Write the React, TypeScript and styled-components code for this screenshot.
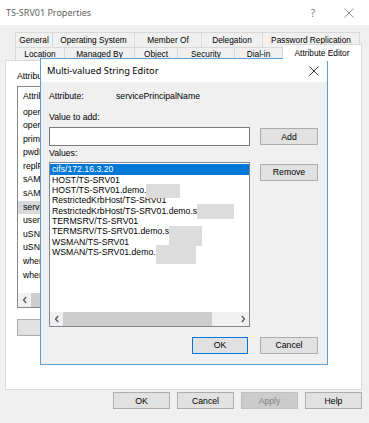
import React from "react";
import styled, { createGlobalStyle } from "styled-components";

const GlobalStyle = createGlobalStyle`
  html, body { margin: 0; padding: 0; }
  body {
    width: 369px; height: 423px; overflow: hidden; background: #f0f0f0;
    font-family: "Liberation Sans", Arial, sans-serif; color: #000;
  }
  * { box-sizing: border-box; }
`;

const Window = styled.div`
  position: relative;
  width: 369px;
  height: 423px;
  background: #f0f0f0;
  display: flex;
  flex-direction: column;
`;

const TitleBar = styled.div<{ $h: number }>`
  height: ${(p) => p.$h}px;
  flex: none;
  background: #fff;
  display: flex;
  align-items: center;
  padding-left: 6px;
`;

const TitleText = styled.span<{ $active?: boolean; $size: number }>`
  flex: 1;
  font-family: "Noto Sans", "Liberation Sans", sans-serif;
  font-size: ${(p) => p.$size}px;
  color: ${(p) => (p.$active ? "#000" : "#5f5f5f")};
  white-space: nowrap;
`;

const CaptionBtn = styled.span<{ $w: number; $color: string }>`
  width: ${(p) => p.$w}px;
  height: 100%;
  display: flex;
  align-items: center;
  justify-content: center;
  color: ${(p) => p.$color};
  font-family: "Noto Sans", sans-serif;
  font-size: 10px;
`;

const TabStrip = styled.div`
  display: flex;
  flex-direction: column;
  padding: 7px 0 0 15px;
`;

const TabRow = styled.div<{ $h: number }>`
  display: flex;
  height: ${(p) => p.$h}px;
`;

const Tab = styled.div<{ $w: number; $selected?: boolean }>`
  width: ${(p) => p.$w}px;
  flex: none;
  height: ${(p) => (p.$selected ? "calc(100% + 4px)" : "100%")};
  margin-top: ${(p) => (p.$selected ? "-3px" : "0")};
  border: 1px solid #d9d9d9;
  border-bottom: none;
  background: ${(p) => (p.$selected ? "#fff" : "#f0f0f0")};
  font-size: 8.3px;
  display: flex;
  align-items: center;
  justify-content: center;
  white-space: nowrap;
  position: ${(p) => (p.$selected ? "relative" : "static")};
  z-index: ${(p) => (p.$selected ? 2 : "auto")};
  & + & { border-left: none; }
`;

const Panel = styled.div`
  margin-left: 5px;
  width: 357px;
  height: 330px;
  border: 1px solid #d9d9d9;
  background: #fff;
  display: flex;
  flex-direction: column;
  align-items: flex-start;
  padding: 10px 0 0 11px;
`;

const Label = styled.div<{ $mt?: number }>`
  font-size: 8.7px;
  line-height: 11px;
  height: 11px;
  margin-top: ${(p) => p.$mt ?? 0}px;
  white-space: nowrap;
`;

const AttrList = styled.div`
  margin-top: 3.5px;
  width: 300px;
  height: 222px;
  border: 1px solid #828790;
  background: #fff;
  display: flex;
  flex-direction: column;
`;

const AttrHeader = styled.div`
  height: 19px;
  flex: none;
  padding-left: 5px;
  display: flex;
  align-items: center;
  font-size: 8.7px;
  white-space: nowrap;
`;

const AttrRow = styled.div<{ $sel?: boolean }>`
  height: 13.6px;
  line-height: 13.6px;
  flex: none;
  padding-left: 5px;
  font-size: 8.7px;
  background: ${(p) => (p.$sel ? "#d9d9d9" : "transparent")};
  white-space: nowrap;
`;

const HScroll = styled.div`
  margin-top: auto;
  height: 14px;
  flex: none;
  display: flex;
  background: #f0f0f0;
`;

const ScrollArrow = styled.div`
  width: 13px;
  flex: none;
  display: flex;
  align-items: center;
  justify-content: center;
`;

const Thumb = styled.div<{ $w: number }>`
  width: ${(p) => p.$w}px;
  flex: none;
  background: #cdcdcd;
`;

const Track = styled.div`
  flex: 1;
`;

const Button = styled.div<{ $w: number; $primary?: boolean; $disabled?: boolean; $mt?: number }>`
  width: ${(p) => p.$w}px;
  height: 17px;
  flex: none;
  margin-top: ${(p) => p.$mt ?? 0}px;
  border: 1px solid ${(p) => (p.$primary ? "#0078d7" : p.$disabled ? "#bfbfbf" : "#adadad")};
  background: ${(p) => (p.$disabled ? "#cccccc" : "#e1e1e1")};
  color: ${(p) => (p.$disabled ? "#838383" : "#000")};
  font-size: 8.7px;
  display: flex;
  align-items: center;
  justify-content: center;
`;

const FooterRow = styled.div`
  display: flex;
  justify-content: flex-end;
  gap: 7px;
  padding-right: 7px;
  margin-top: 2px;
`;

/* ----- Dialog ----- */

const Dialog = styled.div`
  position: absolute;
  left: 40px;
  top: 58px;
  width: 288px;
  height: 307px;
  border: 1px solid #5c9fd6;
  background: #f0f0f0;
  display: flex;
  flex-direction: column;
`;

const DialogBody = styled.div`
  display: flex;
  flex-direction: column;
  padding: 0 9px 0 8px;
`;

const FieldRow = styled.div<{ $mt?: number }>`
  display: flex;
  align-items: center;
  margin-top: ${(p) => p.$mt ?? 0}px;
`;

const FieldName = styled.div`
  width: 67px;
  font-size: 8.7px;
`;

const FieldValue = styled.div`
  font-size: 8.7px;
`;

const EditRow = styled.div<{ $mt?: number; $align?: string }>`
  display: flex;
  gap: 10px;
  align-items: ${(p) => p.$align ?? "center"};
  margin-top: ${(p) => p.$mt ?? 0}px;
`;

const TextInput = styled.div`
  width: 201px;
  height: 19px;
  border: 1px solid #7a7a7a;
  background: #fff;
`;

const ValueList = styled.div`
  width: 201px;
  height: 165px;
  border: 1px solid #828790;
  background: #fff;
  display: flex;
  flex-direction: column;
  padding-top: 1px;
  overflow: hidden;
`;

const ValueItem = styled.div<{ $sel?: boolean }>`
  height: 10.4px;
  line-height: 10.4px;
  flex: none;
  padding-left: 2px;
  font-size: 8.7px;
  white-space: nowrap;
  background: ${(p) => (p.$sel ? "#0078d7" : "transparent")};
  color: ${(p) => (p.$sel ? "#fff" : "#000")};
  &:first-child { height: 11px; line-height: 11px; }
`;

const Redact = styled.span<{ $w: number; $h: number; $dy?: number }>`
  display: inline-block;
  width: ${(p) => p.$w}px;
  height: ${(p) => p.$h}px;
  vertical-align: middle;
  margin-top: ${(p) => -(p.$h - 8) / 2 + (p.$dy ?? 0)}px;
  margin-bottom: ${(p) => -(p.$h - 8) / 2 - (p.$dy ?? 0)}px;
  background: #dcdcdc;
  filter: blur(0.6px);
`;

const DialogFooter = styled.div`
  display: flex;
  justify-content: flex-end;
  gap: 12px;
  margin-top: 10px;
`;

const Chevron = ({ dir }: { dir: "left" | "right" }) => (
  <svg width="6" height="8" viewBox="0 0 6 8">
    <path
      d={dir === "left" ? "M4.2 1 L1.5 4 L4.2 7" : "M1.8 1 L4.5 4 L1.8 7"}
      fill="none"
      stroke="#5a5a5a"
      strokeWidth="1.3"
    />
  </svg>
);

const CloseIcon = ({ color, size }: { color: string; size: number }) => (
  <svg width={size} height={size} viewBox="0 0 10 10">
    <path d="M0.5 0.5 L9.5 9.5 M9.5 0.5 L0.5 9.5" stroke={color} strokeWidth="0.9" fill="none" />
  </svg>
);

const attrs = [
  "operatingSystem",
  "operatingSystemVersion",
  "primaryGroupID",
  "pwdLastSet",
  "replPropertyMetaData",
  "sAMAccountName",
  "sAMAccountType",
  "servicePrincipalName",
  "userAccountControl",
  "uSNChanged",
  "uSNCreated",
  "whenChanged",
  "whenCreated",
];

export default function App() {
  return (
    <>
      <GlobalStyle />
      <Window>
        <TitleBar $h={25}>
          <TitleText $size={9}>TS-SRV01 Properties</TitleText>
          <CaptionBtn $w={36} $color="#7a7a7a">?</CaptionBtn>
          <CaptionBtn $w={36} $color="#7a7a7a" style={{ marginRight: 2 }}>
            <CloseIcon color="#8a8a8a" size={10} />
          </CaptionBtn>
        </TitleBar>

        <TabStrip>
          <TabRow $h={15}>
            <Tab $w={38}>General</Tab>
            <Tab $w={82}>Operating System</Tab>
            <Tab $w={67}>Member Of</Tab>
            <Tab $w={61}>Delegation</Tab>
            <Tab $w={97}>Password Replication</Tab>
          </TabRow>
          <TabRow $h={13}>
            <Tab $w={50}>Location</Tab>
            <Tab $w={70}>Managed By</Tab>
            <Tab $w={43}>Object</Tab>
            <Tab $w={57}>Security</Tab>
            <Tab $w={48}>Dial-in</Tab>
            <Tab $w={79} $selected>Attribute Editor</Tab>
          </TabRow>
        </TabStrip>

        <Panel>
          <Label>Attributes:</Label>
          <AttrList>
            <AttrHeader>Attribute</AttrHeader>
            {attrs.map((a, i) => (
              <AttrRow key={a} $sel={i === 7}>
                {a}
              </AttrRow>
            ))}
            <HScroll>
              <ScrollArrow>
                <Chevron dir="left" />
              </ScrollArrow>
              <Thumb $w={120} />
              <Track />
            </HScroll>
          </AttrList>
          <Button $w={75} $mt={11} />
        </Panel>

        <FooterRow>
          <Button $w={57}>OK</Button>
          <Button $w={57}>Cancel</Button>
          <Button $w={57} $disabled>Apply</Button>
          <Button $w={57}>Help</Button>
        </FooterRow>

        <Dialog>
          <TitleBar $h={23}>
            <TitleText $active $size={9.3}>Multi-valued String Editor</TitleText>
            <CaptionBtn $w={26} $color="#000">
              <CloseIcon color="#222" size={10} />
            </CaptionBtn>
          </TitleBar>
          <DialogBody>
            <FieldRow $mt={9}>
              <FieldName>Attribute:</FieldName>
              <FieldValue>servicePrincipalName</FieldValue>
            </FieldRow>
            <Label $mt={11}>Value to add:</Label>
            <EditRow $mt={4}>
              <TextInput />
              <Button $w={58}>Add</Button>
            </EditRow>
            <Label $mt={2}>Values:</Label>
            <EditRow $mt={2.5} $align="flex-start">
              <ValueList>
                <ValueItem $sel>cifs/172.16.3.20</ValueItem>
                <ValueItem>HOST/TS-SRV01</ValueItem>
                <ValueItem>
                  HOST/TS-SRV01.demo.<Redact $w={34} $h={14} />
                </ValueItem>
                <ValueItem>RestrictedKrbHost/TS-SRV01</ValueItem>
                <ValueItem>
                  RestrictedKrbHost/TS-SRV01.demo.s<Redact $w={37} $h={15} />
                </ValueItem>
                <ValueItem>TERMSRV/TS-SRV01</ValueItem>
                <ValueItem>
                  TERMSRV/TS-SRV01.demo.s<Redact $w={33} $h={20} $dy={4} />
                </ValueItem>
                <ValueItem>WSMAN/TS-SRV01</ValueItem>
                <ValueItem>
                  WSMAN/TS-SRV01.demo.<Redact $w={40} $h={19} $dy={2} />
                </ValueItem>
                <HScroll>
                  <ScrollArrow>
                    <Chevron dir="left" />
                  </ScrollArrow>
                  <Thumb $w={149} />
                  <Track />
                  <ScrollArrow>
                    <Chevron dir="right" />
                  </ScrollArrow>
                </HScroll>
              </ValueList>
              <Button $w={58} $mt={2}>Remove</Button>
            </EditRow>
            <DialogFooter>
              <Button $w={56} $primary>OK</Button>
              <Button $w={58}>Cancel</Button>
            </DialogFooter>
          </DialogBody>
        </Dialog>
      </Window>
    </>
  );
}
